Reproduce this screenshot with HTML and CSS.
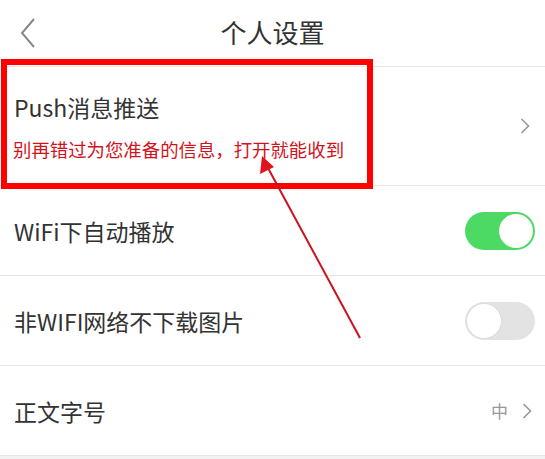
FILE: index.html
```html
<!DOCTYPE html>
<html lang="zh">
<head>
<meta charset="utf-8">
<link rel="stylesheet" href="styles.css">
</head>
<body>
<div class="page">
  <header class="topbar">
    <svg class="back" width="16" height="32" viewBox="0 0 16 32"><polyline points="14,2 2,16 14,30" fill="none" stroke="#888" stroke-width="2"/></svg>
    <h1 class="title">个人设置</h1>
  </header>
  <ul class="list">
    <li class="row row-push">
      <div class="texts">
        <div class="label">Push消息推送</div>
        <div class="sub">别再错过为您准备的信息，打开就能收到</div>
      </div>
      <svg class="chev" width="10" height="16" viewBox="0 0 10 16"><polyline points="1.5,1 8.5,8 1.5,15" fill="none" stroke="#999" stroke-width="1.6"/></svg>
    </li>
    <li class="row">
      <div class="label">WiFi下自动播放</div>
      <span class="toggle on"><span class="knob"></span></span>
    </li>
    <li class="row">
      <div class="label">非WIFI网络不下载图片</div>
      <span class="toggle off"><span class="knob"></span></span>
    </li>
    <li class="row">
      <div class="label">正文字号</div>
      <div class="value">
        <span class="val-text">中</span>
        <svg class="chev" width="10" height="16" viewBox="0 0 10 16"><polyline points="1.5,1 8.5,8 1.5,15" fill="none" stroke="#999" stroke-width="1.6"/></svg>
      </div>
    </li>
  </ul>
  <div class="footer-band"></div>
  <div class="highlight"></div>
  <svg class="arrow" width="545" height="459" viewBox="0 0 545 459">
    <line x1="360" y1="338" x2="268" y2="168" stroke="#c8141e" stroke-width="2"/>
    <polygon points="262,156 260,174 274,167" fill="#e0141e"/>
  </svg>
</div>
</body>
</html>
```
FILE: styles.css
```css
* { box-sizing: border-box; }
html, body { margin: 0; padding: 0; background: #fff; }
body { font-family: "Noto Sans CJK SC", "Noto Sans", sans-serif; color: #333; }
.page { position: relative; width: 545px; height: 459px; overflow: hidden; }
.topbar {
  height: 67px;
  display: flex;
  align-items: center;
  justify-content: center;
  position: relative;
  padding-bottom: 3px;
  border-bottom: 1px solid #e6e6e6;
}
.back { position: absolute; left: 20px; top: 17px; }
.title { margin: 0; font-size: 26px; font-weight: 400; color: #333; line-height: 1; }
.list { list-style: none; margin: 0; padding: 0; }
.row {
  height: 90px;
  display: flex;
  align-items: center;
  justify-content: space-between;
  padding: 0 13px 0 14px;
  border-bottom: 1px solid #e6e6e6;
}
.row-push { height: 119px; padding-right: 15px; }
.texts { display: flex; flex-direction: column; gap: 17px; padding-top: 1px; }
.label { font-size: 23px; line-height: 28px; color: #333; }
.sub { font-size: 18.4px; line-height: 22px; color: #d0141e; margin-left: -1px; }
.chev { display: block; }
.value { display: flex; align-items: center; gap: 14px; padding-right: 0; }
.val-text { font-size: 17px; color: #999; }
.toggle {
  width: 70px;
  height: 38px;
  border-radius: 19px;
  position: relative;
  display: block;
  margin-right: -3px;
}
.toggle.on { background: #4cd964; }
.toggle.off { background: #e3e3e3; }
.knob {
  position: absolute;
  top: 2px;
  width: 34px;
  height: 34px;
  border-radius: 50%;
  background: #fff;
}
.toggle.on .knob { right: 2px; }
.toggle.off .knob { left: 2px; box-shadow: 0 0 0 1px #dcdcdc; }
.footer-band { height: 10px; background: #f2f2f2; }
.highlight {
  position: absolute;
  left: 1px;
  top: 59px;
  width: 372px;
  height: 130px;
  border: 6px solid #f00;
}
.arrow { position: absolute; left: 0; top: 0; pointer-events: none; }
```
